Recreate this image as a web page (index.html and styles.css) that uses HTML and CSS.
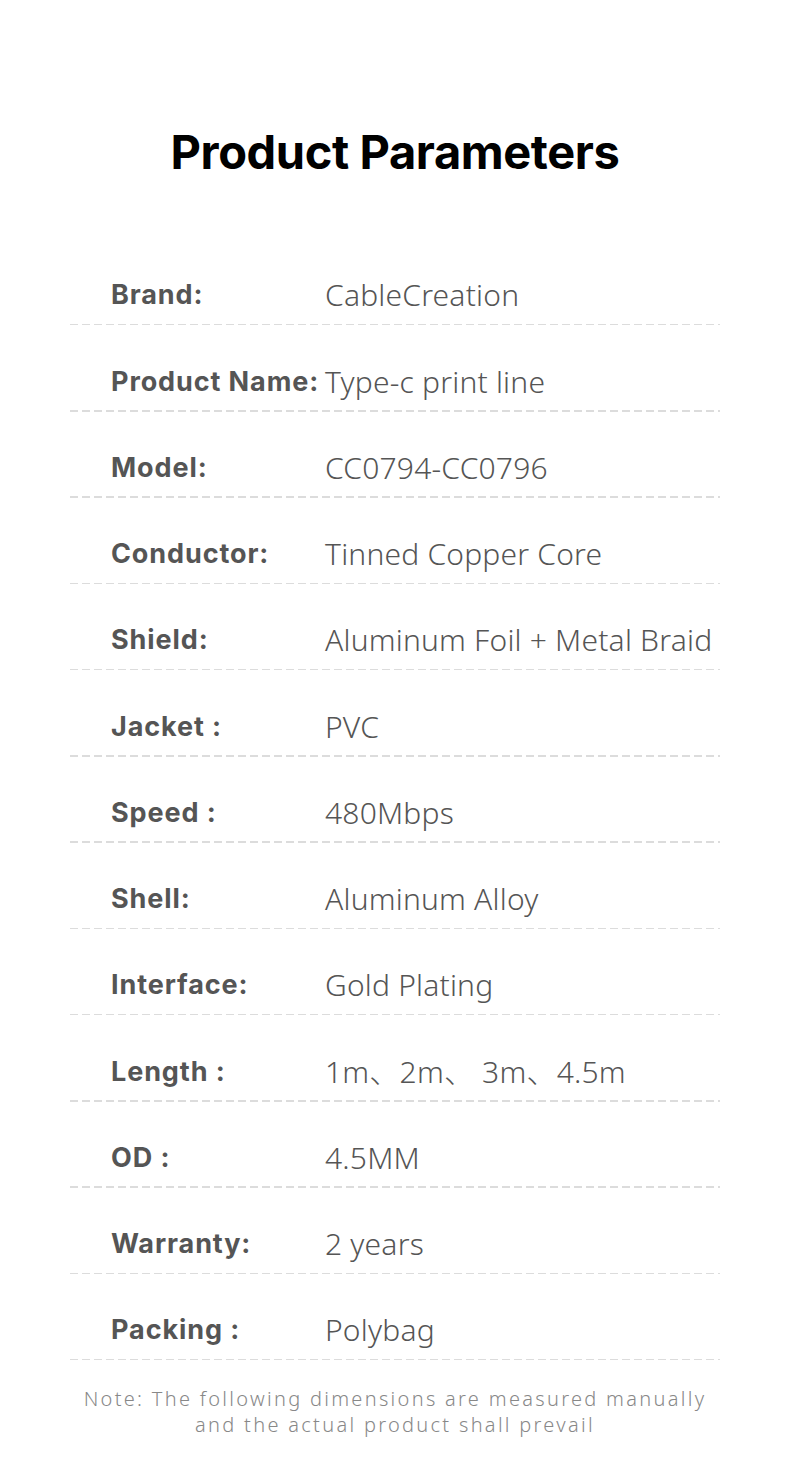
FILE: index.html
```html
<!DOCTYPE html>
<html>
<head>
<meta charset="utf-8">
<link rel="stylesheet" href="styles.css">
</head>
<body>
<main class="page">
  <h1 class="title">Product Parameters</h1>
  <div class="table">
    <div class="row"><span class="label">Brand:</span><span class="value">CableCreation</span></div>
    <div class="row"><span class="label">Product Name:</span><span class="value">Type-c print line</span></div>
    <div class="row"><span class="label">Model:</span><span class="value">CC0794-CC0796</span></div>
    <div class="row"><span class="label">Conductor:</span><span class="value">Tinned Copper Core</span></div>
    <div class="row"><span class="label">Shield:</span><span class="value">Aluminum Foil + Metal Braid</span></div>
    <div class="row"><span class="label">Jacket :</span><span class="value">PVC</span></div>
    <div class="row"><span class="label">Speed :</span><span class="value">480Mbps</span></div>
    <div class="row"><span class="label">Shell:</span><span class="value">Aluminum Alloy</span></div>
    <div class="row"><span class="label">Interface:</span><span class="value">Gold Plating</span></div>
    <div class="row"><span class="label">Length :</span><span class="value">1m、2m、 3m、4.5m</span></div>
    <div class="row"><span class="label">OD :</span><span class="value">4.5MM</span></div>
    <div class="row"><span class="label">Warranty:</span><span class="value">2 years</span></div>
    <div class="row"><span class="label">Packing :</span><span class="value">Polybag</span></div>
  </div>
  <p class="note">Note: The following dimensions are measured manually<br>and the actual product shall prevail</p>
</main>
</body>
</html>
```
FILE: styles.css
```css
html, body {
  margin: 0;
  padding: 0;
  background: #fff;
}
.page {
  width: 790px;
  height: 1458px;
  display: flex;
  flex-direction: column;
  align-items: center;
}
.title {
  margin: 121px 0 0;
  height: 62px;
  line-height: 62px;
  font-family: "Inter", sans-serif;
  font-weight: 700;
  font-size: 47px;
  letter-spacing: -0.4px;
  color: #000;
}
.table {
  margin-top: 56px;
  width: 650px;
  display: flex;
  flex-direction: column;
}
.row {
  height: 86.25px;
  box-sizing: border-box;
  display: flex;
  align-items: flex-end;
  padding: 0 0 12px 41px;
  background-image: linear-gradient(to right, #dcdcdc 0 8px, transparent 8px 12px);
  background-size: 12px 1.5px;
  background-repeat: repeat-x;
  background-position: left bottom;
}
.label {
  width: 214px;
  flex: none;
  font-family: "Inter", sans-serif;
  font-weight: 700;
  font-size: 27px;
  line-height: 36px;
  color: #555;
  letter-spacing: 0.9px;
  white-space: nowrap;
}
.value {
  font-family: "Noto Sans", "Noto Sans CJK SC", sans-serif;
  font-weight: 300;
  font-size: 30px;
  line-height: 36px;
  color: #555;
  letter-spacing: 0.2px;
  white-space: nowrap;
}
.note {
  margin: 26px 0 0;
  text-align: center;
  font-family: "Noto Sans", sans-serif;
  font-weight: 300;
  font-size: 20px;
  line-height: 26px;
  letter-spacing: 2.3px;
  color: #888;
}
```
